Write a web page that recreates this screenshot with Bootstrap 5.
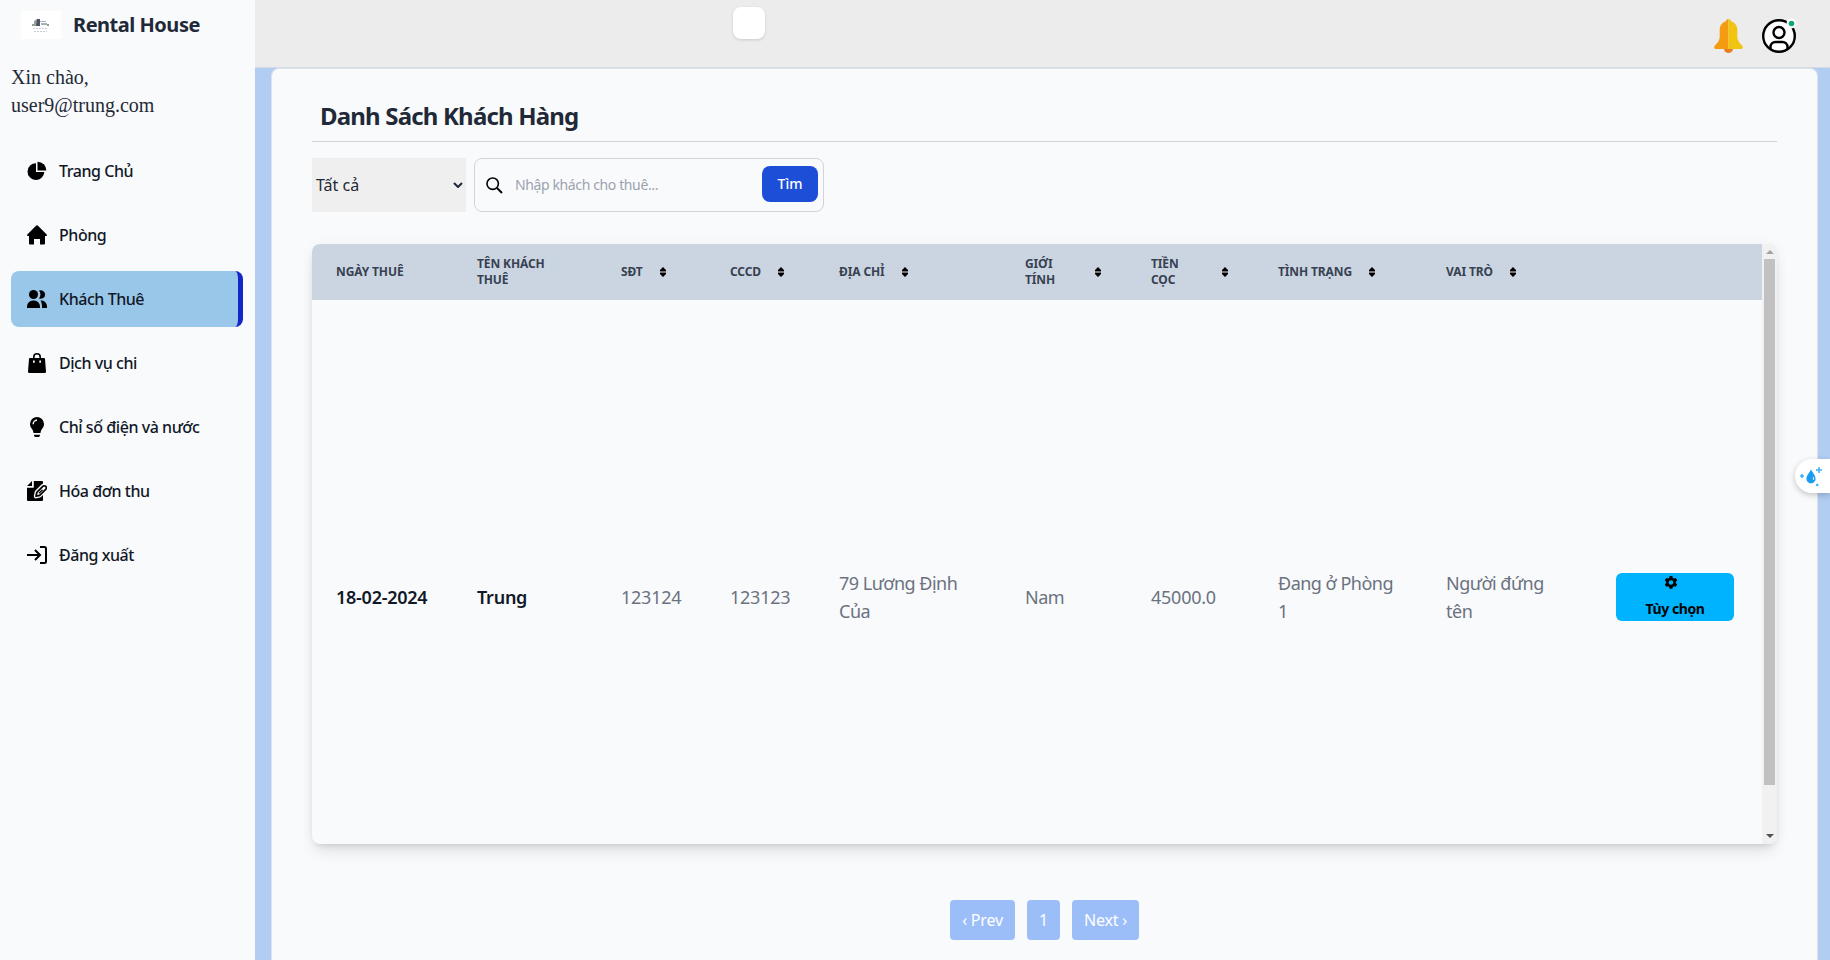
<!DOCTYPE html>
<html lang="vi">
<head>
<meta charset="utf-8">
<meta name="viewport" content="width=device-width, initial-scale=1">
<title>Rental House</title>
<link href="https://cdn.jsdelivr.net/npm/bootstrap@5.3.0/dist/css/bootstrap.min.css" rel="stylesheet">
<style>
  body { font-family: "Noto Sans", sans-serif; color: #1f2937; background: #b1cdf2; line-height: 1.5; }
  /* sidebar */
  .side { width: 255px; background: #f9fafc; padding: 11px 12px 0 11px; }
  .brand-logo { width: 40px; height: 28px; background: #fff; margin-left: 10px; }
  .brand-name { font-size: 20px; font-weight: 700; letter-spacing: -.48px; line-height: 28px; margin-left: 12px; }
  .greet { font-family: "Liberation Serif", serif; font-size: 20px; line-height: 28px; margin: 24px 0 24px; }
  .side-nav { gap: 8px; }
  .side-item { height: 56px; padding-left: 16px; border-radius: 8px; font-size: 16px; font-weight: 500; letter-spacing: -.45px; color: #111827; text-decoration: none; }
  .side-item svg { width: 20px; height: 20px; margin-right: 12px; flex: none; fill: #000; }
  .side-item.current { background: #99c7e9; border-right: 5px solid #1426c8; }
  /* top bar */
  .topbar { height: 68px; background: #ececec; border-bottom: 1px solid #d6dbe2; }
  .blank-box { width: 32px; height: 32px; left: 478px; top: 7px; background: #fff; border-radius: 8px; box-shadow: 0 1px 3px rgba(0,0,0,.14); }
  /* main panel */
  .panel { margin: 0 12px 0 16px; height: 892px; padding: 31px 40px 0; background: #f9fafc; border: 1px solid #dbe2ec; border-bottom: 0; border-radius: 8px 8px 0 0; }
  .panel-title { font-size: 24px; font-weight: 700; letter-spacing: -.82px; line-height: 32px; padding: 0 0 9px 8px; margin-bottom: 16px; border-bottom: 1px solid #d1d5db; }
  .pick { width: 154px; height: 54px; background: #efefef; padding: 0 3px 0 4px; font-size: 16px; }
  .searchbox { width: 350px; height: 54px; margin-left: 8px; padding: 0 5px 0 11px; border: 1px solid #d1d5db; border-radius: 8px; }
  .searchbox .hint { font-size: 14px; letter-spacing: -.38px; color: #9ca3af; margin: -1px 0 0 12px; }
  .btn-find { width: 56px; height: 36px; background: #1d4ed8; color: #fff; font-size: 14px; font-weight: 500; line-height: 34px; border-radius: 8px; padding: 0; margin-bottom: 2px; }
  .btn-find:hover { background: #1e40af; color: #fff; }
  /* grid */
  .sheet { height: 600px; margin-top: 32px; border-radius: 8px; box-shadow: 0 10px 15px -3px rgba(0,0,0,.1), 0 4px 6px -3px rgba(0,0,0,.1), 0 0 14px -2px rgba(0,0,0,.06); background: #f9fafc; }
  .grid-list { table-layout: fixed; width: 1450px; border-collapse: collapse; }
  .grid-list th { height: 56px; background: #cbd5e1; padding: 0 24px; font-size: 12px; font-weight: 700; letter-spacing: -.12px; line-height: 16px; color: #374151; text-transform: uppercase; vertical-align: middle; }
  .grid-list td { height: 594px; padding: 0 24px; font-size: 18px; line-height: 28px; letter-spacing: -.5px; color: #6b7280; vertical-align: middle; }
  .grid-list td.num { letter-spacing: -.25px; }
  .grid-list td.strong { color: #111827; font-weight: 600; letter-spacing: -.25px; }
  .sorter { width: 6px; height: 10px; margin-left: 17px; margin-right: 2px; flex: none; }
  .btn-opt { width: 118px; height: 48px; background: #00b3ff; color: #000; border-radius: 6px; font-size: 14px; font-weight: 700; letter-spacing: -.4px; line-height: 20px; padding: 0; }
  .rail { width: 15px; background: #f1f1f1; }
  .rail-thumb { width: 11px; height: 526px; background: #c1c1c1; }
  .rail-arrow { height: 15px; }
  /* pager */
  .pager { margin-top: 56px; gap: 12px; }
  .pager a { height: 40px; line-height: 40px; border-radius: 4px; background: #9bbef9; color: #fff; font-size: 16px; letter-spacing: -.2px; text-decoration: none; text-align: center; }
  .w-prev { width: 65px; } .w-one { width: 33px; } .w-next { width: 67px; }
  .float-tab { right: 0; top: 459px; width: 35px; height: 34px; background: #fff; border-radius: 17px 0 0 17px; box-shadow: 0 2px 6px rgba(0,0,0,.22); }
</style>
</head>
<body class="vh-100 overflow-hidden">
<div class="d-flex vh-100">

  <aside class="side flex-shrink-0">
    <div class="d-flex align-items-start">
      <span class="brand-logo d-flex align-items-center justify-content-center">
        <svg width="20" height="16" viewBox="0 0 20 16"><path d="M3 4l3-2v7H3z" fill="#9aa0a7"/><path d="M6 2h3v7H5z" fill="#4b545f"/><path d="M9 4h6v1H9zM10 6h6v2h-6z" fill="#a9afb6"/><path d="M1 7h2v2H1zM16 7h2v2h-2z" fill="#8aa383"/><path d="M2 11.500h15M3 14.500h13" stroke="#c9ccd0" stroke-dasharray="2 1"/></svg>
      </span>
      <span class="brand-name">Rental House</span>
    </div>
    <div class="greet">Xin chào,<br>user9@trung.com</div>
    <nav class="side-nav d-flex flex-column">
      <a class="side-item d-flex align-items-center" href="#"><svg viewBox="0 0 20 20"><path d="M9 2.200A8.400 8.400 0 1 0 17.300 11H9z"/><path d="M10.500 .7A8.800 8.800 0 0 1 19.300 9.500H10.500z"/></svg>Trang Chủ</a>
      <a class="side-item d-flex align-items-center" href="#"><svg viewBox="0 0 20 20"><path d="M9.3.5a1 1 0 0 1 1.4 0l9 9c.6.6.2 1.5-.7 1.5h-1v7.5a1 1 0 0 1-1 1h-4V14H7v5.500H3a1 1 0 0 1-1-1V11H1c-.9 0-1.300-.9-.7-1.500z"/></svg>Phòng</a>
      <a class="side-item current d-flex align-items-center" href="#"><svg viewBox="0 0 20 18"><circle cx="6.500" cy="4.500" r="4.500"/><path d="M0 16.500a6 6 0 0 1 6-6h1a6 6 0 0 1 6 6V18H0z"/><path d="M12 .6a4.300 4.300 0 1 1 0 7.800 6.500 6.500 0 0 0 0-7.800zM13.500 10.500A5.800 5.800 0 0 1 20 16.300V18h-5v-1.500c0-2.500-.5-4.300-1.500-6z"/></svg>Khách Thuê</a>
      <a class="side-item d-flex align-items-center" href="#"><svg viewBox="0 0 20 20"><path fill-rule="evenodd" d="M6 5V4a4 4 0 0 1 8 0v1h3a1 1 0 0 1 1 1l1 12.500a1.400 1.400 0 0 1-1.400 1.500H2.400A1.400 1.400 0 0 1 1 18.500L2 6a1 1 0 0 1 1-1zm1.600 0h4.800V4a2.400 2.400 0 0 0-4.800 0zM6 7.500v2.300h1.700V7.500zm6.300 0v2.300H14V7.500z"/></svg>Dịch vụ chi</a>
      <a class="side-item d-flex align-items-center" href="#"><svg viewBox="0 0 20 20"><path fill-rule="evenodd" d="M10 0a7 7 0 0 1 7 7c0 2.500-1.300 4-2.300 5.500-.8 1.200-1 2-1.200 3.500h-7c-.2-1.500-.4-2.300-1.200-3.500C4.300 11 3 9.500 3 7a7 7 0 0 1 7-7zM5.500 7.300H7A3 3 0 0 1 10 4V2.600a4.500 4.500 0 0 0-4.500 4.700zM7 17.700h6c0 1.500-.6 2.300-2 2.300H9c-1.400 0-2-.8-2-2.300z"/></svg>Chỉ số điện và nước</a>
      <a class="side-item d-flex align-items-center" href="#"><svg viewBox="0 0 20 20"><path d="M5 0v5H0zM6.800 0H15a1 1 0 0 1 1 1v18a1 1 0 0 1-1 1H1a1 1 0 0 1-1-1V6.800h6.800z"/><g stroke-linejoin="round"><path d="M9 15.200l.8-3.800 6-6a2.050 2.050 0 0 1 2.900 2.900l-6 6z" fill="#f9fafc" stroke="#f9fafc" stroke-width="4.400"/><path d="M9 15.200l.8-3.800 6-6a2.050 2.050 0 0 1 2.900 2.900l-6 6z" fill="#f9fafc" stroke="#000" stroke-width="1.700"/></g><path d="M12 12.200l3.500-3.500" stroke="#000" stroke-width="1.300"/></svg>Hóa đơn thu</a>
      <a class="side-item d-flex align-items-center" href="#"><svg viewBox="0 0 20 20"><path d="M0 10h12.500M8 5l5 5-5 5M13 2h4.500a1.500 1.500 0 0 1 1.500 1.500v13a1.500 1.500 0 0 1-1.500 1.500H13" fill="none" stroke="#000" stroke-width="2"/></svg>Đăng xuất</a>
    </nav>
  </aside>

  <main class="flex-grow-1">
    <header class="topbar position-relative d-flex justify-content-end align-items-start">
      <span class="blank-box position-absolute"></span>
      <svg width="29" height="34" viewBox="0 0 29 34" style="margin:19px 18px 0 0"><path d="M10 30h9a4.500 4 0 0 1-9 0z" fill="#e67e22"/><path d="M14.500 0a2.500 2.500 0 0 0-2.500 2.300C8 3.500 5.700 7 5.700 11v6c0 4-1.200 6-5.200 10-.5 1-.5 3 2 3h12z" fill="#f39c12"/><path d="M14.500 0a2.500 2.500 0 0 1 2.500 2.300C21 3.500 23.300 7 23.300 11v6c0 4 1.200 6 5.200 10 .5 1 .5 3-2 3h-12z" fill="#f1c40f"/></svg>
      <svg width="36" height="36" viewBox="0 0 36 36" style="margin:18px 33px 0 0"><g fill="#fff" stroke="#000" stroke-width="2.400"><circle cx="18" cy="18" r="15.800"/><circle cx="18" cy="14.500" r="5.500"/><path d="M9.500 31v-2a5 5 0 0 1 5-5h7a5 5 0 0 1 5 5v2" fill="none"/></g><circle cx="30.500" cy="5.500" r="5" fill="#fff"/><circle cx="30.500" cy="5.500" r="2.800" fill="#0ea873"/></svg>
    </header>

    <section class="panel">
      <h1 class="panel-title">Danh Sách Khách Hàng</h1>
      <div class="d-flex">
        <div class="pick d-flex align-items-center justify-content-between">Tất cả
          <svg width="10" height="6" viewBox="0 0 10 6"><path d="M1 1l4 4 4-4" fill="none" stroke="#1f2937" stroke-width="2"/></svg>
        </div>
        <div class="searchbox d-flex align-items-center">
          <svg width="17" height="17" viewBox="0 0 17 17" fill="none" stroke="#000"><circle cx="6.700" cy="6.700" r="5.700" stroke-width="1.600"/><path d="M11 11l5 5" stroke-width="2"/></svg>
          <span class="hint flex-grow-1">Nhập khách cho thuê...</span>
          <button class="btn btn-find" type="button">Tìm</button>
        </div>
      </div>

      <div class="sheet d-flex overflow-hidden">
        <div class="overflow-hidden flex-grow-1">
          <table class="grid-list">
            <colgroup><col style="width:141px"><col style="width:144px"><col style="width:109px"><col style="width:109px"><col style="width:186px"><col style="width:126px"><col style="width:127px"><col style="width:168px"><col style="width:170px"><col style="width:170px"></colgroup>
            <thead>
              <tr>
                <th>Ngày thuê</th>
                <th>Tên khách<br>thuê</th>
                <th><div class="d-flex align-items-center">SĐT<svg class="sorter" viewBox="0 0 6 10"><path d="M3 0l3 3v1H0V3zM3 10l3-3V6H0v1z"/><path d="M0 4h6v2H0z" fill="#777"/></svg></div></th>
                <th><div class="d-flex align-items-center">CCCD<svg class="sorter" viewBox="0 0 6 10"><path d="M3 0l3 3v1H0V3zM3 10l3-3V6H0v1z"/><path d="M0 4h6v2H0z" fill="#777"/></svg></div></th>
                <th><div class="d-flex align-items-center">Địa chỉ<svg class="sorter" viewBox="0 0 6 10"><path d="M3 0l3 3v1H0V3zM3 10l3-3V6H0v1z"/><path d="M0 4h6v2H0z" fill="#777"/></svg></div></th>
                <th><div class="d-flex align-items-center justify-content-between"><span>Giới<br>tính</span><svg class="sorter" viewBox="0 0 6 10"><path d="M3 0l3 3v1H0V3zM3 10l3-3V6H0v1z"/><path d="M0 4h6v2H0z" fill="#777"/></svg></div></th>
                <th><div class="d-flex align-items-center justify-content-between"><span>Tiền<br>cọc</span><svg class="sorter" viewBox="0 0 6 10"><path d="M3 0l3 3v1H0V3zM3 10l3-3V6H0v1z"/><path d="M0 4h6v2H0z" fill="#777"/></svg></div></th>
                <th><div class="d-flex align-items-center">Tình trạng<svg class="sorter" viewBox="0 0 6 10"><path d="M3 0l3 3v1H0V3zM3 10l3-3V6H0v1z"/><path d="M0 4h6v2H0z" fill="#777"/></svg></div></th>
                <th><div class="d-flex align-items-center">Vai trò<svg class="sorter" viewBox="0 0 6 10"><path d="M3 0l3 3v1H0V3zM3 10l3-3V6H0v1z"/><path d="M0 4h6v2H0z" fill="#777"/></svg></div></th>
                <th></th>
              </tr>
            </thead>
            <tbody>
              <tr>
                <td class="strong">18-02-2024</td>
                <td class="strong">Trung</td>
                <td class="num">123124</td>
                <td class="num">123123</td>
                <td>79 Lương Định<br>Của</td>
                <td>Nam</td>
                <td class="num">45000.0</td>
                <td>Đang ở Phòng<br>1</td>
                <td>Người đứng<br>tên</td>
                <td><button class="btn btn-opt d-flex flex-column align-items-center" type="button">
                  <svg width="14" height="14" viewBox="0 0 14 14" class="me-2" style="margin-top:2px"><path fill-rule="evenodd" d="M5.600 0h2.800l.4 1.900 1.200.7 1.800-.6 1.400 2.400-1.400 1.300v1.400l1.400 1.300-1.400 2.400-1.800-.6-1.200.7-.4 1.900H5.600l-.4-1.900-1.200-.7-1.800.6L.8 8.400l1.400-1.300V5.700L.8 4.400 2.200 2l1.800.6 1.200-.7zM7 4.200a2.300 2.300 0 1 0 0 4.600 2.300 2.300 0 0 0 0-4.600z"/></svg>
                  <span style="margin-top:9px">Tùy chọn</span></button></td>
              </tr>
            </tbody>
          </table>
        </div>
        <div class="rail d-flex flex-column align-items-center flex-shrink-0">
          <span class="rail-arrow"><svg class="d-block" width="8" height="15" viewBox="0 0 8 15"><path d="M0 10l4-4 4 4z" fill="#a3a3a3"/></svg></span>
          <span class="rail-thumb"></span>
          <span class="rail-arrow mt-auto"><svg class="d-block" width="8" height="15" viewBox="0 0 8 15"><path d="M0 5l4 4 4-4z" fill="#505050"/></svg></span>
        </div>
      </div>

      <nav class="pager d-flex justify-content-center">
        <a class="w-prev" href="#">‹ Prev</a>
        <a class="w-one" href="#">1</a>
        <a class="w-next" href="#">Next ›</a>
      </nav>
    </section>
  </main>
</div>

<div class="float-tab position-fixed">
  <svg width="26" height="22" viewBox="0 0 26 22" style="margin:7px 0 0 4px" class="d-block"><path d="M12 3.500c2 3.500 4.600 6 4.600 9.300a4.600 4.600 0 0 1-9.200 0c0-3.300 3-5.800 4.600-9.300z" fill="#1a9cf0"/><path d="M14.500 11v3" stroke="#bfe4ff" stroke-width="1.200"/><path d="M17 4h6M20 1v6M1 10h4M3 8v4M17 19h2.500M18.200 17.800v2.500" stroke="#3db2f8" stroke-width="1.500"/></svg>
</div>
<script src="https://cdn.jsdelivr.net/npm/bootstrap@5.3.0/dist/js/bootstrap.bundle.min.js"></script>
</body>
</html>
